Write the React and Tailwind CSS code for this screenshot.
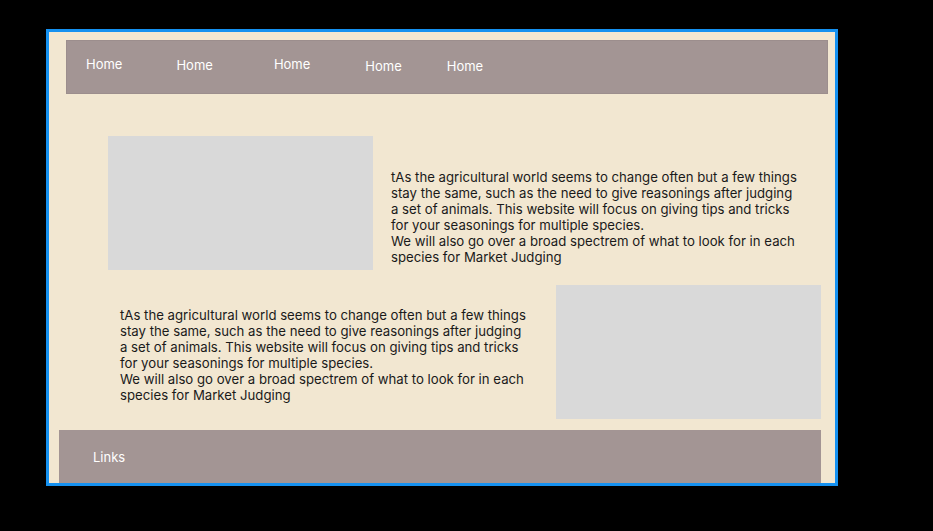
import React from "react";

const BODY =
  "tAs the agricultural world seems to change often but a few things stay the same, such as the need to give reasonings after judging a set of animals. This website will focus on giving tips and tricks for your seasonings for multiple species.";
const BODY2 = "We will also go over a broad spectrem of what to look for in each species for Market Judging";

const NAV = [
  { label: "Home", cls: "ml-[19px] mt-[15px]" },
  { label: "Home", cls: "ml-[54px] mt-[16px]" },
  { label: "Home", cls: "ml-[61px] mt-[15px]" },
  { label: "Home", cls: "ml-[55px] mt-[17px]" },
  { label: "Home", cls: "ml-[45px] mt-[17px]" },
];

function Copy({ className }) {
  return (
    <div className={`text-[13.2px] leading-[16px] text-[#1a1a1a] ${className}`}>
      <p>{BODY}</p>
      <p>{BODY2}</p>
    </div>
  );
}

export default function App() {
  return (
    <div className="h-[531px] w-[933px] overflow-hidden bg-black pl-[46px] pt-[29px] font-['Inter',sans-serif]">
      <div className="flex h-[457px] w-[792px] flex-col overflow-hidden border-[3px] border-[#1591f0] bg-[#f2e7d1]">
        <nav className="ml-[17px] mt-[8px] flex h-[54px] w-[762px] shrink-0 items-start border border-[#9c8e8d] bg-[#a39594]">
          {NAV.map((n, i) => (
            <a key={i} className={`text-[13px] leading-[16px] text-white ${n.cls}`}>
              {n.label}
            </a>
          ))}
        </nav>

        <section className="mt-[42px] flex shrink-0 items-start">
          <div className="ml-[59px] h-[134px] w-[265px] shrink-0 bg-[#d9d9d9]" />
          <Copy className="ml-[18px] mt-[33px] w-[409px]" />
        </section>

        <section className="mt-[15px] flex shrink-0 items-start">
          <Copy className="ml-[71px] mt-[22px] w-[409px]" />
          <div className="ml-[27px] h-[134px] w-[265px] shrink-0 bg-[#d9d9d9]" />
        </section>

        <footer className="ml-[10px] mt-[11px] flex h-[60px] w-[762px] shrink-0 items-start bg-[#a39594]">
          <span className="ml-[34px] mt-[19px] text-[13px] leading-[16px] text-white">Links</span>
        </footer>
      </div>
    </div>
  );
}
